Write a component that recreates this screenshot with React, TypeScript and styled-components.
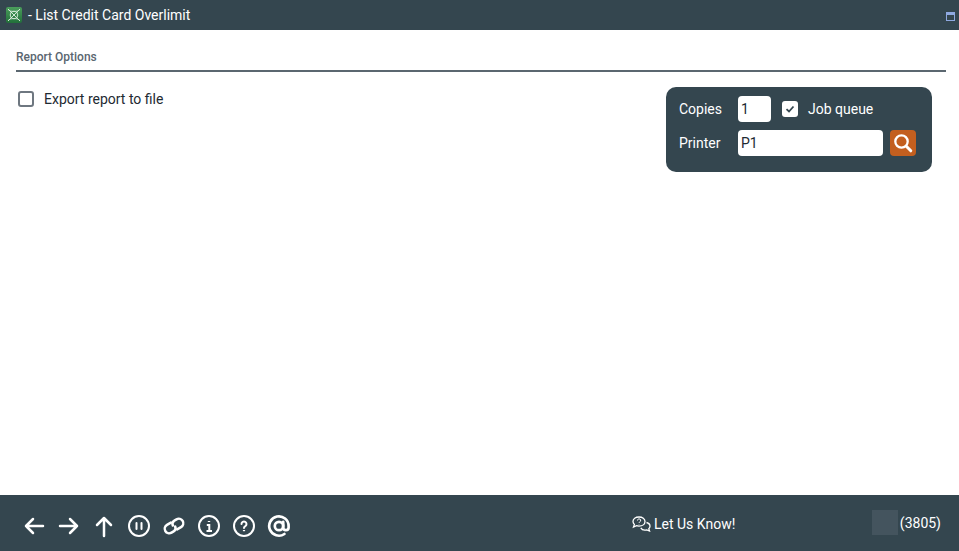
import React, {FC} from 'react';
import styled, {createGlobalStyle} from 'styled-components';

const DARK = '#34464f';
const INK = '#1e2a32';

const GlobalStyle = createGlobalStyle`
    html, body {
        margin: 0;
        padding: 0;
        height: 100%;
        background: #ffffff;
        font-family: Roboto, "Liberation Sans", sans-serif;
        font-size: 14px;
    }
`;

const Page = styled.div`
    width: 959px;
    height: 551px;
    display: flex;
    flex-direction: column;
    overflow: hidden;
`;

const TitleBar = styled.header`
    flex: 0 0 30px;
    height: 30px;
    background: ${DARK};
    display: flex;
    align-items: center;
    padding: 0 4px 0 6px;
    color: #ffffff;
    box-sizing: border-box;
`;

const TitleText = styled.span`
    margin-left: 6px;
    font-size: 14px;
    flex: 1;
`;

const Content = styled.main`
    flex: 1;
    padding: 20px 13px 0 16px;
`;

const SectionTitle = styled.div`
    font-size: 12px;
    font-weight: 500;
    line-height: 14px;
    color: #5a6670;
    padding-bottom: 6px;
    border-bottom: 2px solid #5b6770;
`;

const OptionsRow = styled.div`
    display: flex;
    justify-content: space-between;
    align-items: flex-start;
    padding: 15px 14px 0 2px;
`;

const CheckLabel = styled.label<{$light?: boolean}>`
    display: flex;
    align-items: center;
    gap: 10px;
    color: ${props => (props.$light ? '#ffffff' : INK)};
    line-height: 16px;
    margin-left: ${props => (props.$light ? '11px' : '0')};
    margin-top: ${props => (props.$light ? '0' : '4px')};
`;

const CheckBox = styled.span<{$checked?: boolean}>`
    width: 16px;
    height: 16px;
    box-sizing: border-box;
    border-radius: 3px;
    background: #ffffff;
    border: ${props => (props.$checked ? 'none' : '2px solid #6e7780')};
    display: inline-flex;
    align-items: center;
    justify-content: center;
`;

const PrintPanel = styled.div`
    width: 266px;
    height: 85px;
    box-sizing: border-box;
    background: ${DARK};
    border-radius: 10px;
    padding: 9px 16px 0 13px;
    display: flex;
    flex-direction: column;
    gap: 8px;
    color: #ffffff;
`;

const PanelRow = styled.div`
    display: flex;
    align-items: center;
    height: 26px;
`;

const PanelLabel = styled.span`
    width: 59px;
`;

const TextInput = styled.div<{$width: number}>`
    width: ${props => props.$width}px;
    height: 26px;
    box-sizing: border-box;
    background: #ffffff;
    color: ${INK};
    border-radius: 4px;
    padding: 0 3px;
    line-height: 26px;
`;

const SearchButton = styled.button`
    width: 26px;
    height: 26px;
    margin-left: 7px;
    padding: 0;
    border: none;
    border-radius: 4px;
    background: #c35f1f;
    display: flex;
    align-items: center;
    justify-content: center;
`;

const MinimizeIcon = styled.svg`
    margin-top: 3px;
`;

const Footer = styled.footer`
    flex: 0 0 56px;
    background: ${DARK};
    display: flex;
    align-items: center;
    color: #ffffff;
    padding: 0 18px 0 22px;
`;

const NavIcons = styled.nav`
    display: flex;
    align-items: center;
    gap: 11px;
    flex: 0 0 600px;
    padding-top: 5px;
`;

const FeedbackLink = styled.div`
    display: flex;
    align-items: center;
    gap: 3px;
    flex: 1;
    margin-left: 10px;
    font-size: 14px;
    padding-top: 2px;
`;

const StatusSwatch = styled.div`
    width: 26px;
    height: 25px;
    background: #44545e;
    margin: 0 2px 1px 0;
`;

const WhiteIcon: FC<{children: React.ReactNode}> = ({children}) => (
    <svg
        width="24"
        height="24"
        viewBox="0 0 24 24"
        fill="none"
        stroke="#fff"
        strokeWidth="2.5"
        strokeLinecap="round"
        strokeLinejoin="round"
    >
        {children}
    </svg>
);

const App: FC = () => (
    <Page>
        <GlobalStyle />
        <TitleBar>
            <svg width="16" height="16" viewBox="0 0 16 16">
                <defs>
                    <linearGradient id="logoFill" x1="0" y1="0" x2="0" y2="1">
                        <stop offset="0" stopColor="#4a9e5c" />
                        <stop offset="1" stopColor="#22703a" />
                    </linearGradient>
                </defs>
                <rect width="16" height="16" rx="2" fill="url(#logoFill)" />
                <g fill="none" stroke="#e2f2e4" strokeWidth="0.9">
                    <path d="M2 2L14 14M14 2L2 14" />
                    <circle cx="8" cy="8" r="3.800" />
                    <path d="M2 2.500C5 5 11 5 14 2.500M2 13.500C5 11 11 11 14 13.500" strokeOpacity="0.6" />
                </g>
            </svg>
            <TitleText>- List Credit Card Overlimit</TitleText>
            <MinimizeIcon width="9" height="9" viewBox="0 0 9 9">
                <rect x="0.5" y="0.5" width="8" height="8" fill="none" stroke="#8fa9e0" />
                <rect x="0" y="0" width="9" height="3" fill="#8fa9e0" />
            </MinimizeIcon>
        </TitleBar>
        <Content>
            <SectionTitle>Report Options</SectionTitle>
            <OptionsRow>
                <CheckLabel>
                    <CheckBox />
                    Export report to file
                </CheckLabel>
                <PrintPanel>
                    <PanelRow>
                        <PanelLabel>Copies</PanelLabel>
                        <TextInput $width={33}>1</TextInput>
                        <CheckLabel $light>
                            <CheckBox $checked>
                                <svg width="10" height="10" viewBox="0 0 10 10">
                                    <path d="M1.500 5.200L4 7.500L8.500 2.500" fill="none" stroke={DARK} strokeWidth="1.800" />
                                </svg>
                            </CheckBox>
                            Job queue
                        </CheckLabel>
                    </PanelRow>
                    <PanelRow>
                        <PanelLabel>Printer</PanelLabel>
                        <TextInput $width={145}>P1</TextInput>
                        <SearchButton aria-label="Search">
                            <svg width="20" height="20" viewBox="0 0 20 20" fill="none" stroke="#fff" strokeLinecap="round">
                                <circle cx="8.500" cy="8.500" r="6.200" strokeWidth="2.300" />
                                <path d="M13.300 13.300L17.800 17.800" strokeWidth="3" />
                            </svg>
                        </SearchButton>
                    </PanelRow>
                </PrintPanel>
            </OptionsRow>
        </Content>
        <Footer>
            <NavIcons>
                <WhiteIcon><path d="M21 12H4M11 5L4 12L11 19" /></WhiteIcon>
                <WhiteIcon><path d="M3 12H20M13 5L20 12L13 19" /></WhiteIcon>
                <WhiteIcon><path d="M12 22V4M5 11L12 4L19 11" /></WhiteIcon>
                <WhiteIcon>
                    <circle cx="12" cy="12" r="10" strokeWidth="2" />
                    <path d="M9.500 9V15M14.500 9V15" strokeWidth="2" />
                </WhiteIcon>
                <WhiteIcon>
                    <g transform="rotate(-30 12 12)" strokeWidth="2.500">
                        <path d="M11 7.500H6.500a4.500 4.500 0 0 0 0 9H9c2 0 3.500-1.500 3.800-3.500" />
                        <path d="M13 16.500h4.500a4.500 4.500 0 0 0 0-9H15c-2 0-3.500 1.500-3.800 3.500" />
                    </g>
                </WhiteIcon>
                <WhiteIcon>
                    <circle cx="12" cy="12" r="10" strokeWidth="2" />
                    <path d="M9.800 11H12.300V17M9.500 17H15" strokeWidth="2" strokeLinecap="butt" strokeLinejoin="miter" />
                    <path d="M12 7V8" strokeWidth="2.400" strokeLinecap="butt" />
                </WhiteIcon>
                <WhiteIcon>
                    <circle cx="12" cy="12" r="10" strokeWidth="2" />
                    <path d="M9.500 10a2.500 2.500 0 1 1 3.800 2.100c-.9.5-1.300 1-1.300 1.900" strokeWidth="2" />
                    <path d="M12 16V17.200" strokeWidth="2.200" strokeLinecap="butt" />
                </WhiteIcon>
                <WhiteIcon>
                    <circle cx="12" cy="12" r="4.200" strokeWidth="2.700" />
                    <path d="M16.200 7.800V13.500a2.700 2.700 0 0 0 5.400 0V12a9.700 9.700 0 1 0-4.200 8" strokeWidth="2.700" />
                </WhiteIcon>
            </NavIcons>
            <FeedbackLink>
                <svg width="19" height="16" viewBox="0 0 19 16" fill="none" stroke="#fff" strokeWidth="1.300">
                    <path d="M7 1C3.500 1 1 3 1 5.500c0 1.200.6 2.200 1.400 3L1.500 11l3-1.300c.8.3 1.600.4 2.500.4 3.500 0 6-2 6-4.600S10.500 1 7 1z" />
                    <path d="M14.500 6.500c2 .5 3.500 2 3.500 3.700 0 1-.5 1.900-1.200 2.600l.7 2.200-2.700-1.100c-2.300.6-5-.2-6-2" />
                    <path d="M5.500 4.500a1.600 1.600 0 1 1 2.300 1.400c-.5.3-.8.5-.8 1M7 8v.4" strokeWidth="1" />
                </svg>
                Let Us Know!
            </FeedbackLink>
            <StatusSwatch />
            (3805)
        </Footer>
    </Page>
);

export default App;
